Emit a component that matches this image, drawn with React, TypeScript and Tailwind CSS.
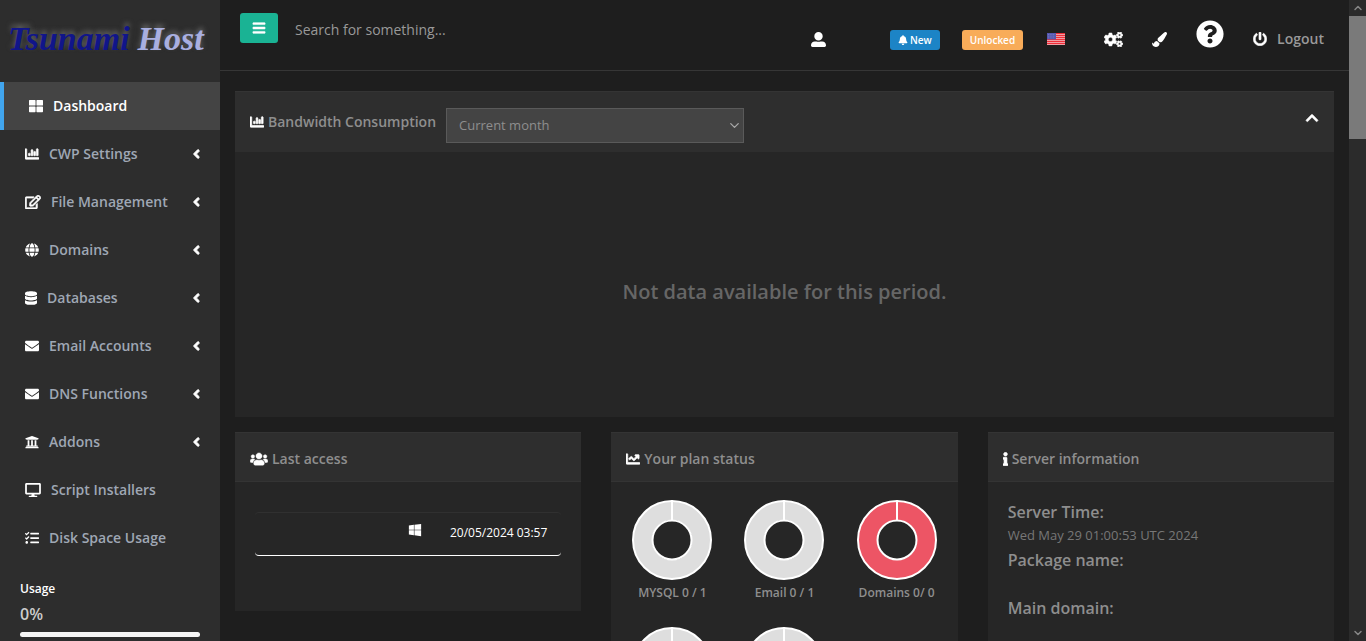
import React from 'react';
import { ChevronDown, ChevronUp } from 'lucide-react';
import {
  FaAngleLeft, FaBars, FaBell, FaChartBar, FaChartLine, FaChevronUp, FaCogs, FaDatabase, FaDesktop,
  FaEnvelope, FaGlobe, FaInfo, FaPaintBrush, FaPowerOff, FaQuestionCircle, FaRegEdit, FaTasks,
  FaThLarge, FaUniversity, FaUserAlt, FaUsers, FaWindows,
} from 'react-icons/fa';

const menu = [
  { label: 'Dashboard', icon: FaThLarge, width: 'w-[14px]', active: true },
  { label: 'CWP Settings', icon: FaChartBar, width: 'w-[14px] stroke-white stroke-[24]', sub: true },
  { label: 'File Management', icon: FaRegEdit, width: 'w-4 stroke-white stroke-[24]', sub: true },
  { label: 'Domains', icon: FaGlobe, width: 'w-[14px]', sub: true },
  { label: 'Databases', icon: FaDatabase, width: 'w-3', sub: true },
  { label: 'Email Accounts', icon: FaEnvelope, width: 'w-[14px]', sub: true },
  { label: 'DNS Functions', icon: FaEnvelope, width: 'w-[14px]', sub: true },
  { label: 'Addons', icon: FaUniversity, width: 'w-[14px]', sub: true },
  { label: 'Script Installers', icon: FaDesktop, width: 'w-4' },
  { label: 'Disk Space Usage', icon: FaTasks, width: 'w-[14px]' },
];

const plan = [
  { label: 'MYSQL 0 / 1', color: '#dedede' },
  { label: 'Email 0 / 1', color: '#dedede' },
  { label: 'Domains 0/ 0', color: '#ed5565' },
  { color: '#dedede' },
  { color: '#dedede' },
];

const Sidebar: React.FC = () => (
  <aside className="w-[220px] shrink-0 bg-[#2d2d2d] overflow-hidden">
    <div className="h-[82px] pl-2 pb-1 flex items-center gap-2 whitespace-nowrap font-['Liberation_Serif',serif] italic font-bold text-[34px] leading-10 [text-shadow:0_-3px_5px_#666]">
      <span className="text-[#10158a]">Tsunami</span>
      <span className="text-[#a9afe0]">Host</span>
    </div>
    <nav>
      {menu.map((item) => (
        <a
          key={item.label}
          href="#"
          className={
            item.active
              ? 'h-12 flex items-center gap-[10px] pl-[25px] pr-5 font-semibold text-white bg-[#444444] border-l-4 border-[#41a5ee]'
              : 'h-12 flex items-center gap-[10px] pl-[25px] pr-5 font-semibold text-[#9fa7b4]'
          }
        >
          <item.icon className={`h-[14px] shrink-0 text-white ${item.width}`} />
          <span>{item.label}</span>
          {item.sub && <FaAngleLeft className="ml-auto w-[7px] h-4 text-white stroke-white stroke-[32]" />}
        </a>
      ))}
    </nav>
    <div className="px-5 pt-[17px]">
      <div className="text-xs font-semibold leading-5 text-white">Usage</div>
      <div className="mb-[3px] text-base leading-[30px] font-semibold text-[#cccccc]">0%</div>
      <div className="h-[5px] rounded-full bg-[#f5f5f5]"></div>
    </div>
  </aside>
);

const Flag = () => (
  <svg viewBox="0 0 18 12" width="18" height="12" className="ml-6">
    <rect width="18" height="12" fill="#f0b9be" />
    {[0, 2, 4, 6, 8, 10].map((y) => (
      <rect key={y} y={y} width="18" height="1.2" fill="#ee2f3a" />
    ))}
    <rect width="9" height="6.4" fill="#5558b0" />
    <path d="M1 1.5h7M1 3.2h7M1 4.9h7" stroke="#9090d0" strokeWidth=".5" strokeDasharray="1 .7" />
  </svg>
);

const Topbar: React.FC = () => (
  <header className="h-[71px] flex items-start border-b border-[#363636] pl-5 pr-[25px]">
    <button aria-label="Toggle menu" className="mt-[13px] w-[38px] h-[30px] rounded-[3px] bg-[#1ab394] text-white flex items-center justify-center">
      <FaBars size={14} className="stroke-white stroke-[20]" />
    </button>
    <input
      type="text"
      aria-label="Search"
      placeholder="Search for something..."
      className="mt-3 ml-[17px] h-[34px] w-[200px] bg-transparent text-sm outline-none placeholder:text-[#999999]"
    />
    <div className="ml-auto mt-[19px] h-10 flex items-center text-white">
      <a href="#" aria-label="Account"><FaUserAlt size={15} /></a>
      <button className="ml-16 mt-0.5 h-5 px-2 rounded-[3px] bg-[#1c84c6] flex items-center gap-[2px] text-[10px] font-semibold">
        <FaBell size={10} />New
      </button>
      <button className="ml-[22px] mt-0.5 h-5 px-2 rounded-[3px] bg-[#f8ac59] text-[10px] font-semibold">Unlocked</button>
      <Flag />
      <a href="#" aria-label="Settings" className="ml-[39px]"><FaCogs className="h-[15px] w-[19px] stroke-white stroke-[16]" /></a>
      <a href="#" aria-label="Theme" className="ml-[29px]"><FaPaintBrush size={15} /></a>
      <a href="#" aria-label="Help" className="ml-[29px] mb-[10px]"><FaQuestionCircle size={28} /></a>
      <a href="#" className="ml-[29px] flex items-center gap-[10px] font-semibold text-[#999999]">
        <FaPowerOff className="text-white stroke-white stroke-[16]" size={14} />Logout
      </a>
    </div>
  </header>
);

const Donut = ({ color }: { color: string }) => (
  <svg viewBox="0 0 80 80" width="80" height="80">
    <circle cx="40" cy="40" r="29.5" fill="none" stroke={color} strokeWidth="19" />
    <circle cx="40" cy="40" r="39" fill="none" stroke="#fff" strokeWidth="2" />
    <circle cx="40" cy="40" r="19.5" fill="none" stroke="#fff" strokeWidth="2" />
    <path d="M40 0v20" stroke="#fff" strokeWidth="2" />
  </svg>
);

type CardProps = { icon: React.ReactNode; title: string; children: React.ReactNode };

const Card: React.FC<CardProps> = ({ icon, title, children }) => (
  <section className="bg-[#262626]">
    <h2 className="h-[50px] px-[15px] pt-1 flex items-center gap-1 bg-[#2e2e2e] border-y border-[#343434] font-semibold text-[#8e8e8e]">
      {icon}
      {title}
    </h2>
    {children}
  </section>
);

const Scrollbar = () => (
  <div className="w-[17px] shrink-0 bg-[#2b2b2b] flex flex-col items-center text-[#868686]">
    <div className="h-4 flex items-center"><ChevronUp size={12} strokeWidth={3} /></div>
    <div className="w-full h-[123px] bg-[#7a7a7a]"></div>
    <div className="mt-auto h-4 flex items-center"><ChevronDown size={12} strokeWidth={3} /></div>
  </div>
);

export default function App() {
  return (
    <div className="h-screen flex overflow-hidden bg-[#1e1e1e] font-['Open_Sans',sans-serif] text-sm text-[#8e8e8e]">
      <Sidebar />
      <div className="flex-1 min-w-0">
        <Topbar />
        <main className="px-[15px] pt-5">
          <section className="bg-[#262626]">
            <div className="h-[61px] flex items-center px-[15px] bg-[#2e2e2e] border-t border-[#343434]">
              <label htmlFor="period" className="flex items-center gap-1 font-semibold">
                <FaChartBar className="text-white stroke-white stroke-[24]" size={14} />
                Bandwidth Consumption
              </label>
              <div className="relative ml-[10px] mt-1.5">
                <select id="period" className="appearance-none w-[298px] h-[35px] px-3 border border-[#5a5a5a] bg-[#444444] text-[13px] text-[#8e8e8e]">
                  <option>Current month</option>
                </select>
                <ChevronDown className="absolute right-0.5 top-[10px] text-[#aaaaaa] pointer-events-none" size={15} />
              </div>
              <button aria-label="Collapse" className="ml-auto mb-2 text-white">
                <FaChevronUp size={14} className="stroke-white stroke-[20]" />
              </button>
            </div>
            <div className="h-[265px] pt-3.5 flex items-center justify-center text-xl font-semibold text-[#666666]">
              Not data available for this period.
            </div>
          </section>

          <div className="mt-[15px] grid grid-cols-3 gap-[30px] items-start">
            <Card icon={<FaUsers className="text-white h-[14px] w-[18px] stroke-white stroke-[16]" />} title="Last access">
              <div className="px-5 pt-[30px] pb-[55px]">
                <table className="w-full border-separate border-spacing-0 border-t border-b rounded-[4px] border-t-[#303030] border-b-white text-xs text-white">
                  <tbody>
                    <tr className="h-[42px]">
                      <td className="w-1/2"></td>
                      <td className="pb-2"><FaWindows size={14} aria-label="Windows" /></td>
                      <td className="pb-0.5 pr-[14px] text-right">20/05/2024 03:57</td>
                    </tr>
                  </tbody>
                </table>
              </div>
            </Card>

            <Card icon={<FaChartLine className="text-white stroke-white stroke-[24]" size={14} />} title="Your plan status">
              <div className="grid grid-cols-3 px-[5px] pt-[18px]">
                {plan.map((item, index) => (
                  <div key={index} className="h-[127px] flex flex-col items-center text-xs font-semibold">
                    <Donut color={item.color} />
                    <span className="mt-[5px]">{item.label}</span>
                  </div>
                ))}
              </div>
            </Card>

            <Card icon={<FaInfo className="text-white h-[14px] w-[5px] stroke-white stroke-[24]" />} title="Server information">
              <dl className="px-5 pt-[17px] pb-8">
                <dt className="text-base leading-[26px] font-semibold">Server Time:</dt>
                <dd className="h-[22px] text-[13px] leading-5 text-[#777777]">Wed May 29 01:00:53 UTC 2024</dd>
                <dt className="text-base leading-[26px] font-semibold">Package name:</dt>
                <dd className="h-[22px]"></dd>
                <dt className="text-base leading-[26px] font-semibold">Main domain:</dt>
                <dd className="h-[22px]"></dd>
              </dl>
            </Card>
          </div>
        </main>
      </div>
      <Scrollbar />
    </div>
  );
}
